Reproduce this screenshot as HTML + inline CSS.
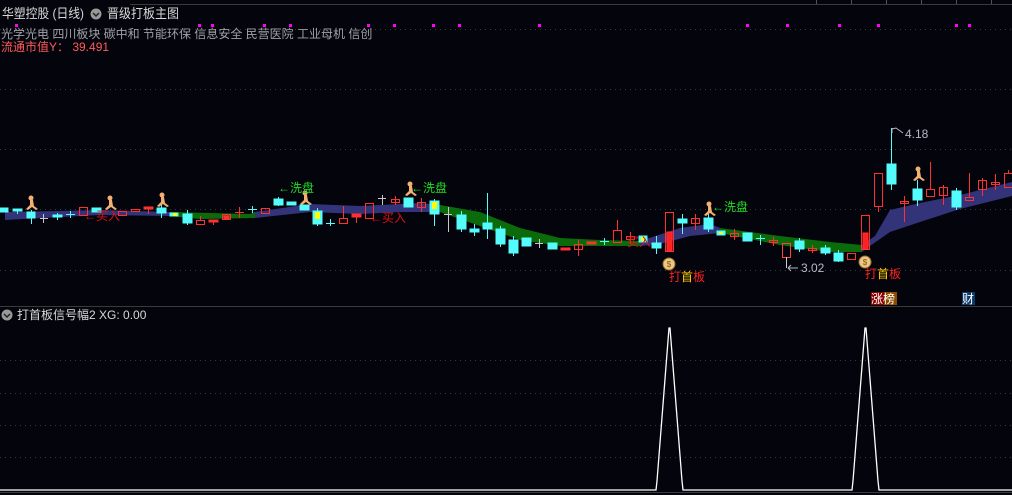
<!DOCTYPE html>
<html><head><meta charset="utf-8"><style>
html,body{margin:0;padding:0;background:#04040c;width:1012px;height:495px;overflow:hidden}
svg{display:block}
text{font-family:"Liberation Sans","Noto Sans CJK SC",sans-serif}
</style></head><body>
<svg width="1012" height="495" viewBox="0 0 1012 495" xmlns="http://www.w3.org/2000/svg">
<rect width="1012" height="495" fill="#04040c"/>
<line x1="130" y1="4.5" x2="1012" y2="4.5" stroke="#3a3a3a"/>
<g stroke="#555"><line x1="816.5" y1="0" x2="816.5" y2="4"/><line x1="851.5" y1="0" x2="851.5" y2="4"/><line x1="886.5" y1="0" x2="886.5" y2="4"/><line x1="921.5" y1="0" x2="921.5" y2="4"/><line x1="956.5" y1="0" x2="956.5" y2="4"/><line x1="991.5" y1="0" x2="991.5" y2="4"/></g>
<g stroke="#3a3a3a" stroke-dasharray="1,4">
<line x1="0" y1="29.5" x2="1012" y2="29.5"/>
<line x1="0" y1="89.5" x2="1012" y2="89.5"/>
<line x1="0" y1="149.5" x2="1012" y2="149.5"/>
<line x1="0" y1="209.5" x2="1012" y2="209.5"/>
<line x1="0" y1="270.5" x2="1012" y2="270.5"/>
<line x1="0" y1="360.5" x2="1012" y2="360.5"/>
<line x1="0" y1="393.5" x2="1012" y2="393.5"/>
<line x1="0" y1="425.5" x2="1012" y2="425.5"/>
<line x1="0" y1="457.5" x2="1012" y2="457.5"/>
</g>
<g fill="#ff00ff">
<rect x="15" y="24" width="3" height="3"/><rect x="198" y="24" width="3" height="3"/><rect x="211" y="24" width="3" height="3"/><rect x="263" y="24" width="3" height="3"/><rect x="289" y="24" width="3" height="3"/><rect x="367" y="24" width="3" height="3"/><rect x="393" y="24" width="3" height="3"/><rect x="432" y="24" width="3" height="3"/><rect x="458" y="24" width="3" height="3"/><rect x="538" y="24" width="3" height="3"/><rect x="746" y="24" width="3" height="3"/><rect x="786" y="24" width="3" height="3"/><rect x="838" y="24" width="3" height="3"/><rect x="877" y="24" width="3" height="3"/><rect x="955" y="24" width="3" height="3"/><rect x="968" y="24" width="3" height="3"/>
</g>
<polygon fill="#33337a" points="5,212 60,211 100,210 170,212 170,216 100,215 60,217 5,220"/>
<polygon fill="#0b6b0b" points="170,212 250,214 255,212 255,218 200,219 170,216"/>
<polygon fill="#33337a" points="255,212 310,204 360,206 420,203 440,205 440,212 400,212 360,214 310,212 255,218"/>
<polygon fill="#0b6b0b" points="440,205 480,212 520,228 560,238 600,240 640,241 640,246 600,246 560,246 520,240 480,226 440,212"/>
<polygon fill="#33337a" points="640,241 680,228 710,224 720,228 720,233 690,236 660,244 640,246"/>
<polygon fill="#0b6b0b" points="720,228 780,236 830,242 862,245 862,252 830,252 780,245 720,233"/>
<polygon fill="#33337a" points="862,245 875,236 890,210 920,203 960,195 1012,182 1012,196 960,209 920,222 890,232 870,246 862,252"/>
<g stroke="#54fcfc" fill="#54fcfc">
<rect x="0" y="208" width="8" height="4"/>
<line x1="17.5" y1="209" x2="17.5" y2="214"/><rect x="13" y="209" width="9" height="2"/>
<line x1="31.5" y1="210" x2="31.5" y2="224"/><rect x="27" y="212" width="8" height="6"/>
<rect x="53" y="215" width="9" height="2"/><line x1="57.5" y1="213" x2="57.5" y2="220"/>
<line x1="66" y1="214.5" x2="75" y2="214.5"/><line x1="70.5" y1="211" x2="70.5" y2="218"/>
<rect x="92" y="208" width="9" height="4"/>
<line x1="161.5" y1="202" x2="161.5" y2="218"/><rect x="157" y="208" width="9" height="5"/>
<rect x="170" y="213" width="8" height="3"/>
<line x1="187.5" y1="210" x2="187.5" y2="225"/><rect x="183" y="214" width="9" height="9"/>
<line x1="248" y1="209.5" x2="257" y2="209.5"/><line x1="252.5" y1="206" x2="252.5" y2="213"/>
<line x1="278.5" y1="197" x2="278.5" y2="206"/><rect x="274" y="199" width="9" height="6"/>
<rect x="287" y="202" width="9" height="3"/>
<rect x="300" y="205" width="9" height="5"/>
<line x1="317.5" y1="208" x2="317.5" y2="226"/><rect x="313" y="211" width="9" height="13"/>
<line x1="326" y1="223.5" x2="335" y2="223.5"/><line x1="330.5" y1="219" x2="330.5" y2="226"/>
<rect x="404" y="198" width="9" height="9"/>
<line x1="434.5" y1="199" x2="434.5" y2="226"/><rect x="430" y="201" width="9" height="13"/>
<line x1="461.5" y1="211" x2="461.5" y2="232"/><rect x="457" y="215" width="9" height="14"/>
<line x1="474.5" y1="224" x2="474.5" y2="236"/><rect x="470" y="229" width="9" height="3"/>
<line x1="487.5" y1="193" x2="487.5" y2="239"/><rect x="483" y="223" width="9" height="6"/>
<line x1="500.5" y1="226" x2="500.5" y2="247"/><rect x="496" y="229" width="9" height="15"/>
<line x1="513.5" y1="236" x2="513.5" y2="256"/><rect x="509" y="240" width="9" height="13"/>
<rect x="522" y="238" width="9" height="8"/>
<rect x="548" y="243" width="9" height="6"/>
<line x1="600" y1="241.5" x2="609" y2="241.5"/><line x1="604.5" y1="238" x2="604.5" y2="245"/>
<rect x="639" y="236" width="8" height="6"/>
<line x1="656.5" y1="236" x2="656.5" y2="254"/><rect x="652" y="243" width="9" height="5"/>
<line x1="682.5" y1="214" x2="682.5" y2="234"/><rect x="678" y="219" width="9" height="4"/>
<line x1="708.5" y1="214" x2="708.5" y2="232"/><rect x="704" y="218" width="9" height="11"/>
<rect x="717" y="231" width="8" height="4"/>
<rect x="743" y="233" width="9" height="8"/>
<line x1="756" y1="238.5" x2="765" y2="238.5"/><line x1="760.5" y1="235" x2="760.5" y2="245"/>
<line x1="799.5" y1="238" x2="799.5" y2="252"/><rect x="795" y="241" width="9" height="8"/>
<line x1="825.5" y1="245" x2="825.5" y2="255"/><rect x="821" y="248" width="9" height="5"/>
<line x1="838.5" y1="250" x2="838.5" y2="262"/><rect x="834" y="253" width="9" height="8"/>
<line x1="891.5" y1="128" x2="891.5" y2="190"/><rect x="887" y="164" width="9" height="20"/>
<line x1="917.5" y1="180" x2="917.5" y2="206"/><rect x="913" y="189" width="9" height="11"/>
<line x1="956.5" y1="188" x2="956.5" y2="210"/><rect x="952" y="191" width="9" height="16"/>
</g>
<g fill="#ffff00"><rect x="173" y="213" width="4" height="3"/><rect x="315" y="212" width="5" height="7"/><rect x="432" y="202" width="5" height="7"/><rect x="641" y="237" width="4" height="4"/><rect x="719" y="232" width="4" height="2"/></g>
<g stroke="#c8c8c8"><line x1="40" y1="218.5" x2="48" y2="218.5"/><line x1="43.5" y1="214" x2="43.5" y2="223"/>
<line x1="378" y1="198.5" x2="386" y2="198.5"/><line x1="382.5" y1="195" x2="382.5" y2="205"/>
<line x1="444" y1="214.5" x2="452" y2="214.5"/><line x1="448.5" y1="207" x2="448.5" y2="232"/>
<line x1="535" y1="243.5" x2="543" y2="243.5"/><line x1="539.5" y1="239" x2="539.5" y2="248"/></g>
<g stroke="#ff3030" fill="none">
<rect x="79.5" y="207.5" width="8" height="8"/>
<rect x="118.5" y="211.5" width="8" height="4"/>
<rect x="131.5" y="209.5" width="8" height="2"/>
<rect x="144" y="207" width="9" height="2" fill="#ff3030"/><line x1="148.5" y1="209" x2="148.5" y2="214"/>
<rect x="196.5" y="220.5" width="8" height="4"/><line x1="200.5" y1="216" x2="200.5" y2="220"/>
<rect x="209" y="220" width="9" height="2" fill="#ff3030"/><line x1="213.5" y1="222" x2="213.5" y2="225"/>
<rect x="222.5" y="214.5" width="8" height="5" /><rect x="224" y="216" width="5" height="3" fill="#ff3030"/>
<line x1="235" y1="212.5" x2="244" y2="212.5"/><line x1="239.5" y1="207" x2="239.5" y2="218"/>
<rect x="261.5" y="208.5" width="8" height="5"/>
<rect x="339.5" y="218.5" width="8" height="5"/><line x1="343.5" y1="206" x2="343.5" y2="218"/>
<rect x="352" y="214" width="9" height="3" fill="#ff3030"/><line x1="356.5" y1="217" x2="356.5" y2="223"/>
<rect x="365.5" y="203.5" width="8" height="15"/>
<rect x="391.5" y="199.5" width="8" height="3"/><line x1="395.5" y1="196" x2="395.5" y2="205"/>
<rect x="417.5" y="202.5" width="8" height="5"/><line x1="421.5" y1="198" x2="421.5" y2="212"/>
<rect x="561" y="248" width="9" height="2" fill="#ff3030"/>
<rect x="574.5" y="244.5" width="8" height="5"/><line x1="578.5" y1="240" x2="578.5" y2="256"/>
<rect x="587" y="242" width="9" height="2" fill="#ff3030"/>
<rect x="613.5" y="230.5" width="8" height="12"/><line x1="617.5" y1="220" x2="617.5" y2="230"/>
<rect x="626.5" y="236.5" width="8" height="3"/><line x1="630.5" y1="232" x2="630.5" y2="244"/>
<rect x="665.5" y="212.5" width="8" height="39"/><rect x="667" y="232" width="5" height="19" fill="#ff2020"/>
<rect x="691.5" y="218.5" width="8" height="5"/><line x1="695.5" y1="214" x2="695.5" y2="230"/>
<rect x="730.5" y="233.5" width="8" height="3"/><line x1="734.5" y1="229" x2="734.5" y2="240"/>
<rect x="769.5" y="240.5" width="8" height="2"/><line x1="773.5" y1="237" x2="773.5" y2="246"/>
<rect x="782.5" y="243.5" width="8" height="14" stroke="#ff4040"/><line x1="786.5" y1="257" x2="786.5" y2="268" stroke="#ccc"/>
<rect x="808.5" y="248.5" width="8" height="2"/><line x1="812.5" y1="245" x2="812.5" y2="253"/>
<rect x="847.5" y="253.5" width="8" height="6"/>
<rect x="861.5" y="215.5" width="8" height="34"/><rect x="863" y="233" width="5" height="16" fill="#ff2020"/>
<rect x="874.5" y="173.5" width="8" height="33"/><line x1="878.5" y1="207" x2="878.5" y2="212"/>
<rect x="900.5" y="201.5" width="8" height="2"/><line x1="904.5" y1="196" x2="904.5" y2="222"/>
<rect x="926.5" y="189.5" width="8" height="7"/><line x1="930.5" y1="162" x2="930.5" y2="189"/>
<rect x="939.5" y="187.5" width="8" height="8"/><line x1="943.5" y1="185" x2="943.5" y2="205"/>
<rect x="965.5" y="197.5" width="8" height="3"/><line x1="969.5" y1="173" x2="969.5" y2="197"/>
<rect x="978.5" y="180.5" width="8" height="9"/><line x1="982.5" y1="178" x2="982.5" y2="196"/>
<rect x="991.5" y="182.5" width="8" height="2"/><line x1="995.5" y1="174" x2="995.5" y2="190"/>
<rect x="1004.5" y="173.5" width="8" height="14"/><line x1="1008.5" y1="170" x2="1008.5" y2="173"/>
</g>
<g fill="#f4b070">
<g transform="translate(31,203)"><circle cx="0" cy="-5" r="2.5"/><path d="M-1,-3 L2,-3 L3,3 L7,6 L5,7 L1,4 L-3,7 L-5,6 L-1,2 Z"/></g>
<g transform="translate(110,203)"><circle cx="0" cy="-5" r="2.5"/><path d="M-1,-3 L2,-3 L3,3 L7,6 L5,7 L1,4 L-3,7 L-5,6 L-1,2 Z"/></g>
<g transform="translate(162,200)"><circle cx="0" cy="-5" r="2.5"/><path d="M-1,-3 L2,-3 L3,3 L7,6 L5,7 L1,4 L-3,7 L-5,6 L-1,2 Z"/></g>
<g transform="translate(305,198)"><circle cx="0" cy="-5" r="2.5"/><path d="M-1,-3 L2,-3 L3,3 L7,6 L5,7 L1,4 L-3,7 L-5,6 L-1,2 Z"/></g>
<g transform="translate(410,189)"><circle cx="0" cy="-5" r="2.5"/><path d="M-1,-3 L2,-3 L3,3 L7,6 L5,7 L1,4 L-3,7 L-5,6 L-1,2 Z"/></g>
<g transform="translate(709,209)"><circle cx="0" cy="-5" r="2.5"/><path d="M-1,-3 L2,-3 L3,3 L7,6 L5,7 L1,4 L-3,7 L-5,6 L-1,2 Z"/></g>
<g transform="translate(918,174)"><circle cx="0" cy="-5" r="2.5"/><path d="M-1,-3 L2,-3 L3,3 L7,6 L5,7 L1,4 L-3,7 L-5,6 L-1,2 Z"/></g>
</g>
<g><ellipse cx="669" cy="264" rx="6" ry="6" fill="#e8c888" stroke="#a07020"/><text x="669" y="267" font-size="8" fill="#8a5000" text-anchor="middle">$</text>
<ellipse cx="865" cy="262" rx="6" ry="6" fill="#e8c888" stroke="#a07020"/><text x="865" y="265" font-size="8" fill="#8a5000" text-anchor="middle">$</text></g>
<g font-size="12">
<text x="278" y="192" fill="#22dd22">←洗盘</text>
<text x="411" y="192" fill="#22dd22">←洗盘</text>
<text x="712" y="211" fill="#22dd22">←洗盘</text>
<text x="84" y="220" fill="#e01010">←买入</text>
<text x="370" y="222" fill="#e01010">←买入</text>
<text x="627" y="246" fill="#e01010">买入</text>
<text x="669" y="281" fill="#ff2020">打</text><text x="681" y="281" fill="#ffcc00">首</text><text x="693" y="281" fill="#ff2020">板</text>
<text x="865" y="278" fill="#ff2020">打</text><text x="877" y="278" fill="#ffcc00">首</text><text x="889" y="278" fill="#ff2020">板</text>
<text x="905" y="138" fill="#b8b8c8">4.18</text>
<text x="801" y="272" fill="#b8b8c8">3.02</text>
</g>
<g stroke="#b8b8c8" fill="none"><path d="M892,128 L892,133 M892,129 L896,128 L903,133"/><path d="M788,268 L798,268 M788,268 L791,265 M788,268 L791,271"/></g>
<rect x="871" y="292" width="13" height="13" fill="#8b0000"/><rect x="884" y="292" width="13" height="13" fill="#8b4a00"/>
<text x="871" y="303" font-size="12" fill="#fff">涨榜</text>
<rect x="962" y="292" width="13" height="13" fill="#0a3a6a"/><text x="962" y="303" font-size="12" fill="#fff">财</text>
<text x="2" y="18" font-size="13" fill="#d8d8d8" textLength="82" lengthAdjust="spacingAndGlyphs">华塑控股 (日线)</text>
<circle cx="96" cy="14" r="5.5" fill="#999"/><path d="M93,13 L96,16 L99,13" stroke="#222" stroke-width="1.5" fill="none"/>
<text x="107" y="18" font-size="13" fill="#d8d8d8" textLength="72" lengthAdjust="spacingAndGlyphs">晋级打板主图</text>
<text x="1" y="38" font-size="12" fill="#a0a0a8">光学光电 四川板块 碳中和 节能环保 信息安全 民营医院 工业母机 信创</text>
<text x="1" y="51" font-size="12" fill="#ff5a5a">流通市值Y： 39.491</text>
<rect x="0" y="306" width="1012" height="1" fill="#3a3a3a"/>
<circle cx="7" cy="315" r="5.5" fill="#999"/><path d="M4,314 L7,317 L10,314" stroke="#222" stroke-width="1.5" fill="none"/>
<text x="17" y="319" font-size="12" fill="#d8d8d8">打首板信号幅2  XG: 0.00</text>
<polyline fill="none" stroke="#ffffff" stroke-width="1.3" points="0,490 656,490 657,481 669,328 670,328 682,481 683,490 852,490 853,481 865,328 866,328 878,481 879,490 1012,490"/>
<rect x="0" y="492" width="1012" height="1" fill="#3a3a3a"/>
</svg>
</body></html>
